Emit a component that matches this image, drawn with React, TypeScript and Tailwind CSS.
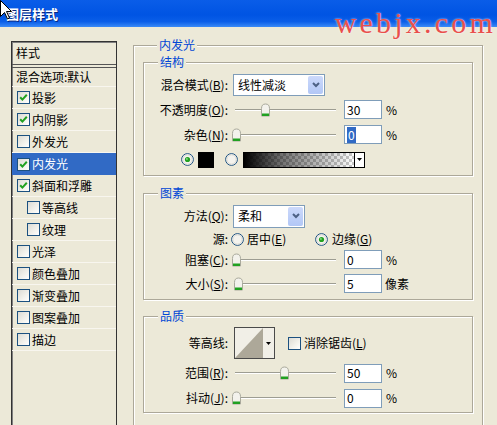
import React from 'react';

function CheckBox({ checked }: { checked?: boolean }) {
  return (
    <div className="w-[13px] h-[13px] shrink-0 border border-[#1C5180] bg-[linear-gradient(135deg,#DCDBD4_0%,#F3F2EC_60%,#FFFFFF_100%)] flex items-center justify-center">
      {checked && (
        <svg width="9" height="9" viewBox="0 0 9 9">
          <path d="M1.2 4.2 L3.4 6.6 L7.8 1.8" fill="none" stroke="#21A121" strokeWidth="2" />
        </svg>
      )}
    </div>
  );
}

function Radio({ checked }: { checked?: boolean }) {
  return (
    <svg width="13" height="13" viewBox="0 0 13 13" className="shrink-0">
      <circle cx="6.5" cy="6.5" r="5.9" fill="#F4F3EE" stroke="#1C5180" strokeWidth="1" />
      <circle cx="6.5" cy="6.5" r="4.6" fill="none" stroke="#DCDBD4" strokeWidth="1" />
      {checked && <circle cx="6.5" cy="6.5" r="2.6" fill="#21A121" />}
      {checked && <circle cx="5.9" cy="5.9" r="0.9" fill="#8FE08F" />}
    </svg>
  );
}

function Slider({ value }: { value: number }) {
  return (
    <div className="relative w-[101px] h-[14px] shrink-0 flex items-center">
      <div className="w-full h-[2px] border-t border-t-[#9D9D92] border-b border-b-white" />
      <svg
        className="absolute top-0"
        style={{ left: 1 + value * 97 - 5.5 }}
        width="11"
        height="14"
        viewBox="0 0 11 14"
      >
        <path d="M1.5 13 V5.5 Q1.5 1 5.5 1 Q9.5 1 9.5 5.5 V13 Z" fill="#F3F2EC" stroke="#A9A99C" strokeWidth="1" />
        <rect x="2" y="10.5" width="7" height="2.5" fill="#21A121" />
      </svg>
    </div>
  );
}

function NumBox({ value, selected }: { value: string; selected?: boolean }) {
  return (
    <div className="w-[38px] h-[19px] shrink-0 border border-[#7F9DB9] bg-white flex items-center pl-[2px]">
      {selected ? <span className="bg-[#316AC5] text-white px-[1px] leading-[16px]">{value}</span> : value}
    </div>
  );
}

function Chevron() {
  return (
    <svg width="8" height="6" viewBox="0 0 8 6">
      <path d="M1 1 L4 4 L7 1" fill="none" stroke="#4D6185" strokeWidth="2" />
    </svg>
  );
}

function Select({ text, cls }: { text: string; cls: string }) {
  return (
    <div className={cls}>
      <div className="flex-1 pl-[4px] whitespace-nowrap">{text}</div>
      <div className="w-[15px] h-[calc(100%-2px)] mr-[1px] rounded-[2px] bg-[linear-gradient(to_bottom,#CCD9FB,#B2C7F6)] flex items-center justify-center">
        <Chevron />
      </div>
    </div>
  );
}

function Label({ children }: { children: React.ReactNode }) {
  return <div className="w-[84px] shrink-0 text-right whitespace-nowrap">{children}</div>;
}

function SmallArrow() {
  return (
    <svg width="5" height="3" viewBox="0 0 5 3">
      <path d="M0 0 H5 L2.5 3 Z" fill="#000" />
    </svg>
  );
}

const legendCls = 'ml-[14px] px-[2px] h-[14px] leading-[14px] text-[#0046D5] bg-[#ECE9D8]';
const boxCls = 'border border-[#ACA899] shadow-[inset_1px_1px_0_#fff,1px_1px_0_#fff]';

const items: { label: string; checked?: boolean; selected?: boolean; indent?: boolean }[] = [
  { label: '投影', checked: true },
  { label: '内阴影', checked: true },
  { label: '外发光' },
  { label: '内发光', checked: true, selected: true },
  { label: '斜面和浮雕', checked: true },
  { label: '等高线', indent: true },
  { label: '纹理', indent: true },
  { label: '光泽' },
  { label: '颜色叠加' },
  { label: '渐变叠加' },
  { label: '图案叠加' },
  { label: '描边' },
];

export default function App() {
  return (
    <div className="relative w-[497px] h-[425px] overflow-hidden bg-[#ECE9D8] font-['Noto_Sans_CJK_SC',sans-serif] text-[12px] text-black">
      {/* Title bar */}
      <div className="h-[27px] bg-[linear-gradient(to_bottom,#0A5DE8_0%,#0054E3_55%,#0A5EE8_80%,#3A8AF7_100%)] flex items-center pl-[6px]">
        <span className="text-white font-bold text-[13px] [text-shadow:1px_1px_0_#0A2A80]">图层样式</span>
      </div>

      <div className="flex">
        {/* Left style list */}
        <div className="ml-[11px] mt-[14px] w-[106px] h-[420px] shrink-0 border border-[#333] shadow-[inset_1px_1px_0_#808080] flex flex-col">
          <div className="h-[22px] flex items-center pl-[4px]">样式</div>
          <div className="h-[4px] border-t border-b border-[#555]" />
          <div className="h-[19px] flex items-center pl-[4px] border-b border-[#F8F6EF]">混合选项:默认</div>
          {items.map((it) => (
            <div
              key={it.label}
              className={
                (it.selected ? 'bg-[#316AC5] text-white ' : 'border-b border-[#F8F6EF] ') +
                (it.indent ? 'pl-[15px] ' : 'pl-[5px] ') +
                'h-[22px] flex items-center gap-[2px]'
              }
            >
              <CheckBox checked={it.checked} />
              <span>{it.label}</span>
            </div>
          ))}
        </div>

        {/* Right panel */}
        <fieldset className={'ml-[16px] mt-[11px] w-[350px] px-[9px] pt-[3px] pb-[12px] shrink-0 ' + boxCls}>
          <legend className={legendCls}>内发光</legend>

          {/* 结构 */}
          <fieldset className={'pt-[3px] pb-[3px] ' + boxCls}>
            <legend className={legendCls}>结构</legend>
            <div className="h-[25px] flex items-center">
              <Label>
                混合模式(<u>B</u>):
              </Label>
              <Select
                text="线性减淡"
                cls="ml-[5px] w-[92px] h-[22px] border border-[#7F9DB9] bg-white flex items-center"
              />
            </div>
            <div className="h-[25px] flex items-center">
              <Label>
                不透明度(<u>O</u>):
              </Label>
              <div className="ml-[7px]">
                <Slider value={0.3} />
              </div>
              <div className="ml-[8px]">
                <NumBox value="30" />
              </div>
              <span className="ml-[4px]">%</span>
            </div>
            <div className="h-[25px] flex items-center">
              <Label>
                杂色(<u>N</u>):
              </Label>
              <div className="ml-[7px]">
                <Slider value={0} />
              </div>
              <div className="ml-[8px]">
                <NumBox value="0" selected />
              </div>
              <span className="ml-[4px]">%</span>
            </div>
            <div className="h-[25px] flex items-center pl-[37px]">
              <Radio checked />
              <div className="ml-[4px] w-[16px] h-[16px] bg-black" />
              <div className="ml-[11px]">
                <Radio />
              </div>
              <div className="ml-[5px] w-[122px] h-[16px] border border-black flex">
                <div className="flex-1 bg-[linear-gradient(to_right,#000_0%,rgba(0,0,0,0.55)_35%,rgba(0,0,0,0)_100%),repeating-conic-gradient(#C8C8C8_0_25%,#FFFFFF_0_50%)] bg-[length:100%_100%,6px_6px]" />
                <div className="w-[10px] border-l border-black bg-white flex items-center justify-center">
                  <SmallArrow />
                </div>
              </div>
            </div>
          </fieldset>

          {/* 图素 */}
          <fieldset className={'mt-[10px] pt-[4px] pb-[6px] ' + boxCls}>
            <legend className={legendCls}>图素</legend>
            <div className="h-[24px] flex items-center">
              <Label>
                方法(<u>Q</u>):
              </Label>
              <Select
                text="柔和"
                cls="ml-[5px] w-[72px] h-[23px] border border-[#7F9DB9] bg-white flex items-center"
              />
            </div>
            <div className="h-[22px] flex items-center">
              <Label>源:</Label>
              <div className="ml-[3px] w-[84px] flex items-center">
                <Radio />
                <span className="ml-[3px]">
                  居中(<u>E</u>)
                </span>
              </div>
              <Radio checked />
              <span className="ml-[4px]">
                边缘(<u>G</u>)
              </span>
            </div>
            <div className="h-[19px] flex items-center">
              <Label>
                阻塞(<u>C</u>):
              </Label>
              <div className="ml-[7px]">
                <Slider value={0} />
              </div>
              <div className="ml-[8px]">
                <NumBox value="0" />
              </div>
              <span className="ml-[4px]">%</span>
            </div>
            <div className="mt-[5px] h-[19px] flex items-center">
              <Label>
                大小(<u>S</u>):
              </Label>
              <div className="ml-[7px]">
                <Slider value={0.03} />
              </div>
              <div className="ml-[8px]">
                <NumBox value="5" />
              </div>
              <span className="ml-[3px]">像素</span>
            </div>
          </fieldset>

          {/* 品质 */}
          <fieldset className={'mt-[9px] pt-[4px] pb-[4px] ' + boxCls}>
            <legend className={legendCls}>品质</legend>
            <div className="h-[32px] flex items-center">
              <Label>等高线:</Label>
              <div className="ml-[6px] w-[41px] h-[32px] border border-[#4A4A4A] bg-[#F1EFE7] flex">
                <svg width="28" height="30" viewBox="0 0 28 30" className="shrink-0">
                  <polygon points="0,30 28,0 28,30" fill="#ADA899" />
                </svg>
                <div className="flex-1 flex items-center justify-center">
                  <SmallArrow />
                </div>
              </div>
              <div className="ml-[13px]">
                <CheckBox />
              </div>
              <span className="ml-[3px]">
                消除锯齿(<u>L</u>)
              </span>
            </div>
            <div className="mt-[4px] h-[20px] flex items-center">
              <Label>
                范围(<u>R</u>):
              </Label>
              <div className="ml-[7px]">
                <Slider value={0.5} />
              </div>
              <div className="ml-[8px]">
                <NumBox value="50" />
              </div>
              <span className="ml-[4px]">%</span>
            </div>
            <div className="mt-[5px] h-[20px] flex items-center">
              <Label>
                抖动(<u>J</u>):
              </Label>
              <div className="ml-[7px]">
                <Slider value={0} />
              </div>
              <div className="ml-[8px]">
                <NumBox value="0" />
              </div>
              <span className="ml-[4px]">%</span>
            </div>
          </fieldset>
        </fieldset>
      </div>

      {/* Watermark */}
      <div className="absolute right-[1px] top-[8px] whitespace-nowrap font-['Liberation_Serif',serif] text-[30px] leading-none tracking-[3.2px] text-[#E94F4C] [text-shadow:0_0_2px_#fff]">
        webjx.com
      </div>

      {/* Mouse cursor */}
      <svg className="absolute left-0 top-0" width="13" height="20" viewBox="0 0 13 20">
        <path d="M0.5 0.5 L0.5 16.5 L4.5 12.5 L7.5 19 L9.5 18 L6.5 11.5 L11.5 11.5 Z" fill="#fff" stroke="#000" strokeWidth="1" />
      </svg>
    </div>
  );
}
